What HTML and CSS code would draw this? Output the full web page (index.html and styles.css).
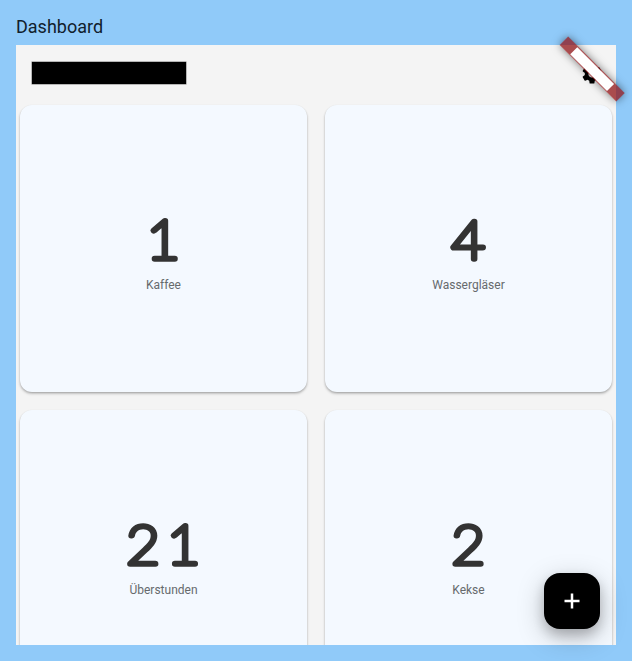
FILE: index.html
```
<!DOCTYPE html>
<html lang="de">
<head>
<meta charset="utf-8">
<title>Dashboard</title>
<link rel="stylesheet" href="styles.css">
</head>
<body>
<h1 class="title">Dashboard</h1>
<main class="screen">
  <div class="viewport">
    <header class="bar">
      <div class="name"></div>
      <svg class="gear" viewBox="0 0 24 24"><path d="M19.14 12.94c.04-.3.06-.61.06-.94s-.02-.64-.07-.94l2.03-1.58c.18-.14.23-.41.12-.61l-1.92-3.32c-.12-.22-.37-.29-.59-.22l-2.39.96c-.5-.38-1.03-.7-1.62-.94l-.36-2.54c-.04-.24-.24-.41-.48-.41h-3.84c-.24 0-.43.17-.47.41l-.36 2.54c-.59.24-1.13.57-1.62.94l-2.39-.96c-.22-.08-.47 0-.59.22L2.74 8.87c-.12.21-.08.47.12.61l2.03 1.58c-.05.3-.09.63-.09.94s.02.64.07.94l-2.03 1.58c-.18.14-.23.41-.12.61l1.92 3.32c.12.22.37.29.59.22l2.39-.96c.5.38 1.03.7 1.62.94l.36 2.54c.05.24.24.41.48.41h3.84c.24 0 .44-.17.47-.41l.36-2.54c.59-.24 1.13-.56 1.62-.94l2.39.96c.22.08.47 0 .59-.22l1.92-3.32c.12-.22.07-.47-.12-.61l-2.01-1.58zM12 15.6c-1.98 0-3.6-1.62-3.6-3.6s1.62-3.6 3.6-3.6 3.6 1.62 3.6 3.6-1.62 3.6-3.6 3.6z"/></svg>
    </header>
    <div class="grid">
      <section class="card"><svg class="count" viewBox="0 0 120 60"><text x="62.5" y="50">1</text></svg><p class="label">Kaffee</p></section>
      <section class="card"><svg class="count" viewBox="0 0 120 60"><text x="62.5" y="50">4</text></svg><p class="label">Wassergläser</p></section>
      <section class="card"><svg class="count" viewBox="0 0 120 60"><text x="62.5" y="50">21</text></svg><p class="label">Überstunden</p></section>
      <section class="card"><svg class="count" viewBox="0 0 120 60"><text x="62.5" y="50">2</text></svg><p class="label">Kekse</p></section>
    </div>
  </div>
  <div class="ribbon"><div class="ribbon-blank"></div></div>
  <button class="fab" aria-label="+"><svg viewBox="0 0 24 24"><path d="M12 4.5v15M4.5 12h15"/></svg></button>
</main>
</body>
</html>
```
FILE: styles.css
```
* { box-sizing: border-box; }
body {
  margin: 0;
  height: 661px;
  padding: 16px;
  overflow: hidden;
  background: #90caf9;
  font-family: Roboto, sans-serif;
}
.title {
  margin: 0;
  height: 29px;
  font-size: 18px;
  line-height: 22px;
  font-weight: 400;
  color: #10202c;
}
.screen { position: relative; width: 600px; height: 600px; }
.viewport { height: 600px; overflow: hidden; background: #f4f4f4; }
.bar {
  height: 56px;
  padding: 1px 12.5px 0 16px;
  display: flex;
  align-items: center;
  justify-content: space-between;
}
.name { width: 154px; height: 22px; margin-bottom: 1px; background: #000; box-shadow: 0 0 0 .5px #777; }
.gear { width: 24px; height: 24px; }
.grid {
  display: grid;
  grid-template-columns: 287px 287px;
  grid-auto-rows: 287px;
  gap: 18px;
  padding: 4px;
}
.card {
  display: flex;
  flex-direction: column;
  align-items: center;
  padding-top: 104px;
  border-radius: 12px;
  background: #f4f9ff;
  box-shadow: 0 1px 2px rgba(0,0,0,.2), 0 2px 3px rgba(0,0,0,.16);
}
.count { width: 120px; height: 60px; overflow: visible; transform: scaleX(1.08); }
.count text {
  font: 100 53.5px Lato, sans-serif;
  text-anchor: middle;
  letter-spacing: 6.5px;
  fill: #333;
  stroke: #333;
  stroke-width: 5.5px;
  stroke-linejoin: round;
}
.label { margin: 8px 0 0; font-size: 12px; line-height: 16px; color: #666a6d; }
.ribbon {
  position: absolute;
  left: 536px;
  top: 17.8px;
  width: 80px;
  height: 12.4px;
  padding: 1px 14px;
  transform: rotate(45deg);
  background: rgba(144,18,20,.74);
  box-shadow: 0 0 8px rgba(0,0,0,.5);
}
.ribbon-blank { height: 10.4px; background: #fff; }
.fab {
  position: absolute;
  left: 528px;
  top: 528px;
  width: 56px;
  height: 56px;
  padding: 0;
  border: 0;
  border-radius: 16px;
  display: flex;
  align-items: center;
  justify-content: center;
  background: #000;
  box-shadow: 0 6px 12px rgba(0,0,0,.2), 0 8px 28px rgba(0,0,0,.22);
}
.fab svg { width: 24px; height: 24px; fill: none; stroke: #fff; stroke-width: 2.5; }
```
